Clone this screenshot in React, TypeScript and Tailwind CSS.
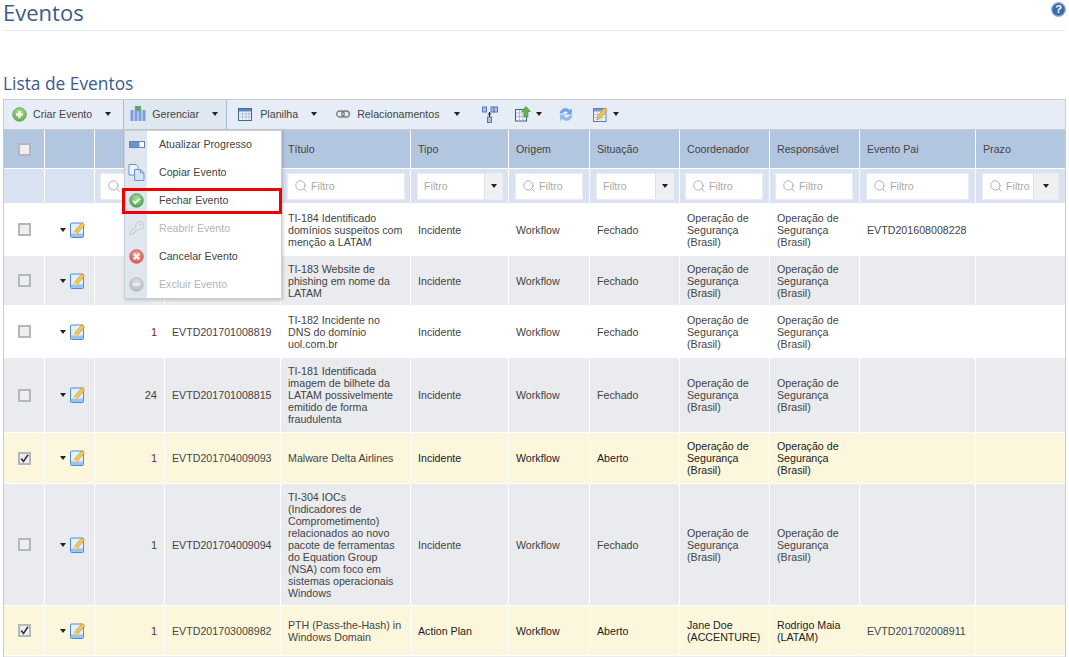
import { Search } from 'lucide-react'

type Row = {
  h: string
  bg: string
  checked?: boolean
  count?: string
  countRed?: boolean
  id?: string
  title: string
  tipo: string
  situacao: string
  coord: string[]
  resp: string[]
  pai?: string
  strong?: boolean
}

const OPER = ['Operação de', 'Segurança', '(Brasil)']

const ROWS: Row[] = [
  {
    h: 'h-[52px]',
    bg: 'bg-white',
    title: 'TI-184 Identificado domínios suspeitos com menção a LATAM',
    tipo: 'Incidente',
    situacao: 'Fechado',
    coord: OPER,
    resp: OPER,
    pai: 'EVTD201608008228'
  },
  {
    h: 'h-[50px]',
    bg: 'bg-[#e9ebee]',
    title: 'TI-183 Website de phishing em nome da LATAM',
    tipo: 'Incidente',
    situacao: 'Fechado',
    coord: OPER,
    resp: OPER
  },
  {
    h: 'h-[52px]',
    bg: 'bg-white',
    count: '1',
    countRed: true,
    id: 'EVTD201701008819',
    title: 'TI-182 Incidente no DNS do domínio uol.com.br',
    tipo: 'Incidente',
    situacao: 'Fechado',
    coord: OPER,
    resp: OPER
  },
  {
    h: 'h-[75px]',
    bg: 'bg-[#e9ebee]',
    count: '24',
    id: 'EVTD201701008815',
    title:
      'TI-181 Identificada imagem de bilhete da LATAM possivelmente emitido de forma fraudulenta',
    tipo: 'Incidente',
    situacao: 'Fechado',
    coord: OPER,
    resp: OPER
  },
  {
    h: 'h-[51px]',
    bg: 'bg-[#fcf7dc]',
    checked: true,
    count: '1',
    countRed: true,
    id: 'EVTD201704009093',
    title: 'Malware Delta Airlines',
    tipo: 'Incidente',
    situacao: 'Aberto',
    coord: OPER,
    resp: OPER,
    strong: true
  },
  {
    h: 'h-[122px]',
    bg: 'bg-[#e9ebee]',
    count: '1',
    id: 'EVTD201704009094',
    title:
      'TI-304 IOCs (Indicadores de Comprometimento) relacionados ao novo pacote de ferramentas do Equation Group (NSA) com foco em sistemas operacionais Windows',
    tipo: 'Incidente',
    situacao: 'Fechado',
    coord: OPER,
    resp: OPER
  },
  {
    h: 'h-[50px]',
    bg: 'bg-[#fcf7dc]',
    checked: true,
    count: '1',
    countRed: true,
    id: 'EVTD201703008982',
    title: 'PTH (Pass-the-Hash) in Windows Domain',
    tipo: 'Action Plan',
    situacao: 'Aberto',
    coord: ['Jane Doe', '(ACCENTURE)'],
    resp: ['Rodrigo Maia', '(LATAM)'],
    pai: 'EVTD201702008911',
    strong: true
  }
]

const HEADERS = [
  '',
  '',
  '',
  '',
  'Título',
  'Tipo',
  'Origem',
  'Situação',
  'Coordenador',
  'Responsável',
  'Evento Pai',
  'Prazo'
]

const WIDTHS = [
  'w-[41px]',
  'w-[50px]',
  'w-[70px]',
  'w-[116px]',
  'w-[130px]',
  'w-[98px]',
  'w-[81px]',
  'w-[90px]',
  'w-[90px]',
  'w-[90px]',
  'w-[116px]',
  'w-[89px]'
]

function Caret({ className = '' }: { className?: string }) {
  return (
    <span
      className={`inline-block h-0 w-0 border-x-[3.5px] border-t-[4px] border-x-transparent border-t-[#222] ${className}`}
    />
  )
}

function CircleIcon({ from, to, children }: { from: string; to: string; children: React.ReactNode }) {
  const id = `g${from.slice(1)}`
  return (
    <svg width="15" height="15" viewBox="0 0 15 15">
      <defs>
        <radialGradient id={id} cx="50%" cy="35%" r="70%">
          <stop offset="0%" stopColor={from} />
          <stop offset="100%" stopColor={to} />
        </radialGradient>
      </defs>
      <circle cx="7.5" cy="7.5" r="6.8" fill={`url(#${id})`} stroke={to} strokeWidth="0.8" />
      {children}
    </svg>
  )
}

function PlusIcon() {
  return (
    <CircleIcon from="#b5e09c" to="#5da844">
      <path d="M7.5 4v7M4 7.5h7" stroke="#fff" strokeWidth="2.2" />
    </CircleIcon>
  )
}

function CheckIcon() {
  return (
    <CircleIcon from="#a9dca0" to="#46a04a">
      <path d="M4 7.6l2.4 2.4 4.6-4.4" fill="none" stroke="#fff" strokeWidth="2" />
    </CircleIcon>
  )
}

function CancelIcon() {
  return (
    <CircleIcon from="#f6a8a0" to="#d9514a">
      <path d="M4.8 4.8l5.4 5.4M10.2 4.8l-5.4 5.4" stroke="#fff" strokeWidth="2.2" />
    </CircleIcon>
  )
}

function MinusIcon() {
  return (
    <CircleIcon from="#dfe1e4" to="#b4b8bd">
      <path d="M4 7.5h7" stroke="#f4f4f4" strokeWidth="2" />
    </CircleIcon>
  )
}

function BarsIcon() {
  return (
    <svg width="16" height="16" viewBox="0 0 16 16">
      <path d="M0.5 4h3v11h-3zM4.5 3h3v12h-3zM8.5 3h3v12h-3zM12.5 4h3v11h-3z" fill="#7ba0dc" />
      <path d="M5 0h6v3l-3 2.5L5 3z" fill="#5ea65a" />
    </svg>
  )
}

function GridIcon() {
  return (
    <svg width="14" height="13" viewBox="0 0 14 13">
      <rect x="0.5" y="0.5" width="13" height="12" fill="#f3f6fb" stroke="#44689e" />
      <rect x="1" y="1" width="12" height="2.5" fill="#5f84bd" />
      <path d="M1 6h12M1 9h12M4.5 3.5V12M8 3.5V12M11 3.5V12" stroke="#9fb6d6" strokeWidth="0.8" />
    </svg>
  )
}

function LinkIcon() {
  return (
    <svg width="14" height="8" viewBox="0 0 14 8">
      <rect x="0.7" y="1" width="7.5" height="6" rx="3" fill="none" stroke="#777" strokeWidth="1.3" />
      <rect x="5.8" y="1" width="7.5" height="6" rx="3" fill="none" stroke="#777" strokeWidth="1.3" />
    </svg>
  )
}

function HierarchyIcon() {
  return (
    <svg width="16" height="17" viewBox="0 0 16 17">
      <rect x="0.5" y="1" width="4" height="5" fill="#a9c3ea" stroke="#4f78b8" />
      <rect x="9" y="1" width="3" height="5" fill="#a9c3ea" stroke="#4f78b8" />
      <rect x="12" y="1" width="3.5" height="5" fill="#a9c3ea" stroke="#4f78b8" />
      <rect x="5.5" y="11" width="4" height="5.5" fill="#a9c3ea" stroke="#4f78b8" />
      <path d="M7.5 6v5M5.8 8h3.4" stroke="#222" strokeWidth="1" />
    </svg>
  )
}

function ExportIcon() {
  return (
    <svg width="16" height="16" viewBox="0 0 16 16">
      <rect x="0.5" y="3.5" width="11" height="11.5" fill="#eef2f8" stroke="#3d5f92" />
      <path d="M1 7h10M1 10.5h10M4.5 4v11M8 4v11" stroke="#9fb6d6" strokeWidth="0.8" />
      <path d="M11 0.5l4.5 5H13V11H9V5.5H6.5z" fill="#63b354" stroke="#3f8f38" strokeWidth="0.6" />
    </svg>
  )
}

function RefreshIcon() {
  return (
    <svg width="16" height="17" viewBox="0 0 15 16">
      <path d="M1.5 7C2 3.5 5 1.5 8 2.2c1.3.3 2.2 1 2.8 1.8L13 2v6H7.5l1.8-1.9C8 4.5 5 5 4.5 7z" fill="#6fa6e6" />
      <path d="M13.5 9c-.5 3.5-3.5 5.5-6.5 4.8-1.3-.3-2.2-1-2.8-1.8L2 14V8h5.5l-1.8 1.9C7 11.5 10 11 10.5 9z" fill="#8dbcf0" />
    </svg>
  )
}

function EditGridIcon() {
  return (
    <svg width="15" height="15" viewBox="0 0 15 15">
      <rect x="0.5" y="1.5" width="12.5" height="13" fill="#eef3fa" stroke="#5b7fb5" />
      <rect x="1" y="2" width="11.5" height="2.5" fill="#7c9ccb" />
      <path d="M1 7.5h11M1 10.5h11M4.5 4.5V14M8.5 4.5V14" stroke="#b4c6df" strokeWidth="0.8" />
      <path d="M11.5 0.8l2.8 2.2-7.3 8.6-3.4 1.3.6-3.5z" fill="#f0c24e" stroke="#c08f2a" strokeWidth="0.6" />
    </svg>
  )
}

function NoteEditIcon() {
  return (
    <svg width="15" height="16" viewBox="0 0 15 16">
      <rect x="0.5" y="1" width="13" height="14.5" rx="1" fill="#e6f0fb" stroke="#4f8ad6" />
      <rect x="1" y="11.5" width="12" height="3.5" fill="#9cc6f2" />
      <path d="M12 0.6l2.7 2.3-7.2 8.3-3.5 1.3.7-3.6z" fill="#f4c659" stroke="#bf8f2e" strokeWidth="0.6" />
      <path d="M4 12.5l.5-3 2.8 2z" fill="#f6e3b8" />
    </svg>
  )
}

function ProgressIcon() {
  return (
    <svg width="16" height="7" viewBox="0 0 16 7">
      <rect x="0.5" y="0.5" width="15" height="6" fill="#fff" stroke="#5f84c4" />
      <rect x="1" y="1" width="9.5" height="5" fill="#6f93cd" />
    </svg>
  )
}

function CopyIcon() {
  return (
    <svg width="17" height="17" viewBox="0 0 17 17">
      <path d="M1 .5h7l2 2V11H1z" fill="#eef4fc" stroke="#6d94d2" />
      <path d="M6.5 5.5h6l3.5 3.5v7.5H6.5z" fill="#d5e4f8" stroke="#6d94d2" />
      <path d="M12.5 5.5V9H16" fill="none" stroke="#6d94d2" />
    </svg>
  )
}

function KeyIcon() {
  return (
    <svg width="16" height="16" viewBox="0 0 16 16">
      <path d="M1 12.5L7 6.8a4 4 0 1 1 2.4 2.4L8 10.5H6.5V12H5v1.5H3L2 15H1z" fill="#e6e7e9" stroke="#c6c8cb" strokeWidth="1" />
      <circle cx="11.5" cy="4.5" r="1.1" fill="#c6c8cb" />
    </svg>
  )
}

function HelpIcon() {
  return (
    <svg width="15" height="15" viewBox="0 0 15 15">
      <circle cx="7.5" cy="7.5" r="6.8" fill="#3f6ba8" stroke="#8fb0d8" strokeWidth="1.2" />
      <text x="7.5" y="11.3" textAnchor="middle" fontSize="11" fontWeight="700" fontFamily="Liberation Sans" fill="#fff">
        ?
      </text>
    </svg>
  )
}

function Checkbox({ checked }: { checked?: boolean }) {
  return (
    <span className="mx-auto flex h-[13px] w-[13px] items-center justify-center border-2 border-[#b3b8bf] bg-[#eeeeee]">
      {checked && (
        <svg width="9" height="9" viewBox="0 0 9 9">
          <path d="M1.2 4.5l2.3 3L8 .8" fill="none" stroke="#333" strokeWidth="1.6" />
        </svg>
      )}
    </span>
  )
}

function Filter({ width, icon = true, select = false, selectW = 'w-[18px]' }: { width: string; icon?: boolean; select?: boolean; selectW?: string }) {
  return (
    <div className={`flex h-[27px] items-stretch border border-[#e9ecf1] bg-white ${width}`}>
      <div className="flex min-w-0 flex-1 items-center overflow-hidden pl-[6px]">
        {icon && <Search size={14} strokeWidth={1.3} className="mr-[3px] shrink-0 text-[#999]" />}
        <span className="text-[#aaaaaa]">Filtro</span>
      </div>
      {select && (
        <div className={`flex items-center justify-center border-l border-[#dfe2e6] bg-[#eff0f2] ${selectW}`}>
          <Caret />
        </div>
      )}
    </div>
  )
}

function MenuItem({ icon, label, disabled }: { icon: React.ReactNode; label: string; disabled?: boolean }) {
  return (
    <div className="flex h-[28px] items-center">
      <div className="flex w-[23px] justify-center">{icon}</div>
      <span className={`ml-[11px] ${disabled ? 'text-[#b4b4b4]' : 'text-[#444]'}`}>{label}</span>
    </div>
  )
}

function Lines({ lines }: { lines: string[] }) {
  return (
    <>
      {lines.map(l => (
        <div key={l}>{l}</div>
      ))}
    </>
  )
}

export default function App() {
  return (
    <div className="relative h-[657px] w-[1069px] overflow-hidden bg-white font-['Liberation_Sans',Arial,sans-serif] text-[10.67px] leading-[12px] text-[#444]">
      <div className="mx-[3px] flex h-[31px] w-[1062px] items-start justify-between border-b border-[#e6ebf1]">
        <h1 className="font-['Open_Sans',sans-serif] text-[22px] leading-[25px] text-[#3c5a8c]">Eventos</h1>
        <div className="mr-[-1px] mt-[2px]">
          <HelpIcon />
        </div>
      </div>
      <h2 className="mx-[3px] mt-[40px] font-['Open_Sans',sans-serif] text-[17.33px] leading-[24px] text-[#3c5a8c]">
        Lista de Eventos
      </h2>

      <div className="ml-[3px] mt-[4px] flex h-[31px] w-[1063px] items-center border border-[#c8cdd3] bg-[#e6edf7] pb-px">
        <div className="ml-[8px]">
          <PlusIcon />
        </div>
        <span className="ml-[6px]">Criar Evento</span>
        <Caret className="ml-[13px]" />
        <div className="ml-[12px] flex h-[29px] w-[104px] items-center self-start border-x border-[#a9bbd3] bg-[#dfe7f0] pb-px pl-[6px]">
          <BarsIcon />
          <span className="ml-[6px]">Gerenciar</span>
          <Caret className="ml-[13px]" />
        </div>
        <div className="ml-[11px]">
          <GridIcon />
        </div>
        <span className="ml-[8px]">Planilha</span>
        <Caret className="ml-[13px]" />
        <div className="ml-[19px]">
          <LinkIcon />
        </div>
        <span className="ml-[7px]">Relacionamentos</span>
        <Caret className="ml-[14px]" />
        <div className="ml-[22px]">
          <HierarchyIcon />
        </div>
        <div className="ml-[17px]">
          <ExportIcon />
        </div>
        <Caret className="ml-[5px]" />
        <div className="ml-[16px]">
          <RefreshIcon />
        </div>
        <div className="ml-[19px]">
          <EditGridIcon />
        </div>
        <Caret className="ml-[5px]" />
      </div>

      <div className="ml-[3px] w-[1063px] border-x border-[#c8cdd3]">
        <table className="w-[1061px] table-fixed border-separate border-spacing-0">
          <colgroup>
            {WIDTHS.map((w, i) => (
              <col key={i} className={w} />
            ))}
          </colgroup>
          <thead>
            <tr className="h-[39px] bg-[#b3c6e0]">
              {HEADERS.map((h, i) => (
                <th key={i} className="border-b border-r border-white px-[7px] text-left font-normal text-[#444] last:border-r-0">
                  {i === 0 ? <Checkbox /> : h}
                </th>
              ))}
            </tr>
            <tr className="h-[35px] bg-[#d8e2f0]">
              <th className="border-b border-r border-white" />
              <th className="border-b border-r border-white" />
              <th className="border-b border-r border-white pl-[5px] text-left font-normal">
                <Filter width="w-[64px]" />
              </th>
              <th className="border-b border-r border-white" />
              <th className="border-b border-r border-white pl-[6px] text-left font-normal">
                <Filter width="w-[118px]" />
              </th>
              <th className="border-b border-r border-white pl-[6px] text-left font-normal">
                <Filter width="w-[86px]" icon={false} select />
              </th>
              <th className="border-b border-r border-white pl-[6px] text-left font-normal">
                <Filter width="w-[68px]" />
              </th>
              <th className="border-b border-r border-white pl-[6px] text-left font-normal">
                <Filter width="w-[78px]" icon={false} select />
              </th>
              <th className="border-b border-r border-white pl-[5px] text-left font-normal">
                <Filter width="w-[78px]" />
              </th>
              <th className="border-b border-r border-white pl-[5px] text-left font-normal">
                <Filter width="w-[78px]" />
              </th>
              <th className="border-b border-r border-white pl-[6px] text-left font-normal">
                <Filter width="w-[103px]" />
              </th>
              <th className="border-b border-white pl-[6px] text-left font-normal">
                <Filter width="w-[77px]" select selectW="w-[25px]" />
              </th>
            </tr>
          </thead>
          <tbody>
            {ROWS.map((r, i) => {
              const cell = `border-b border-r border-white px-[7px] ${r.strong ? 'text-[#222]' : 'text-[#444]'}`
              return (
                <tr key={i} className={`${r.h} ${r.bg}`}>
                  <td className="border-b border-r border-white">
                    <Checkbox checked={r.checked} />
                  </td>
                  <td className="border-b border-r border-white">
                    <div className="flex items-center pl-[15px]">
                      <Caret />
                      <span className="ml-[4px]">
                        <NoteEditIcon />
                      </span>
                    </div>
                  </td>
                  <td className={`border-b border-r border-white pr-[7px] text-right text-[11px] ${r.countRed ? 'text-[#8c1c1c]' : 'text-[#444]'}`}>
                    {r.count}
                  </td>
                  <td className="border-b border-r border-white px-[7px] text-[#444]">{r.id}</td>
                  <td className="border-b border-r border-white px-[7px] text-[#444]">{r.title}</td>
                  <td className={cell}>{r.tipo}</td>
                  <td className={cell}>Workflow</td>
                  <td className={cell}>{r.situacao}</td>
                  <td className={cell}>
                    <Lines lines={r.coord} />
                  </td>
                  <td className={cell}>
                    <Lines lines={r.resp} />
                  </td>
                  <td className="border-b border-r border-white px-[7px] text-[#444]">{r.pai}</td>
                  <td className="border-b border-white" />
                </tr>
              )
            })}
            <tr className="h-[10px] bg-[#e9ebee]">
              <td colSpan={12} />
            </tr>
          </tbody>
        </table>
      </div>

      <div className="absolute left-[124px] top-[130px] h-[169px] w-[158px] border border-[#c9ced4] bg-white shadow-[1px_1px_3px_rgba(0,0,0,0.2)]">
        <div className="absolute inset-y-0 left-0 w-[22px] bg-[#dfe6f0]" />
        <div className="relative -mt-px">
          <MenuItem icon={<ProgressIcon />} label="Atualizar Progresso" />
          <MenuItem icon={<CopyIcon />} label="Copiar Evento" />
          <MenuItem icon={<CheckIcon />} label="Fechar Evento" />
          <MenuItem icon={<KeyIcon />} label="Reabrir Evento" disabled />
          <MenuItem icon={<CancelIcon />} label="Cancelar Evento" />
          <MenuItem icon={<MinusIcon />} label="Excluir Evento" disabled />
        </div>
      </div>
      <div className="absolute left-[122px] top-[188px] h-[26px] w-[160px] border-[3px] border-[#ee0000]" />
    </div>
  )
}
